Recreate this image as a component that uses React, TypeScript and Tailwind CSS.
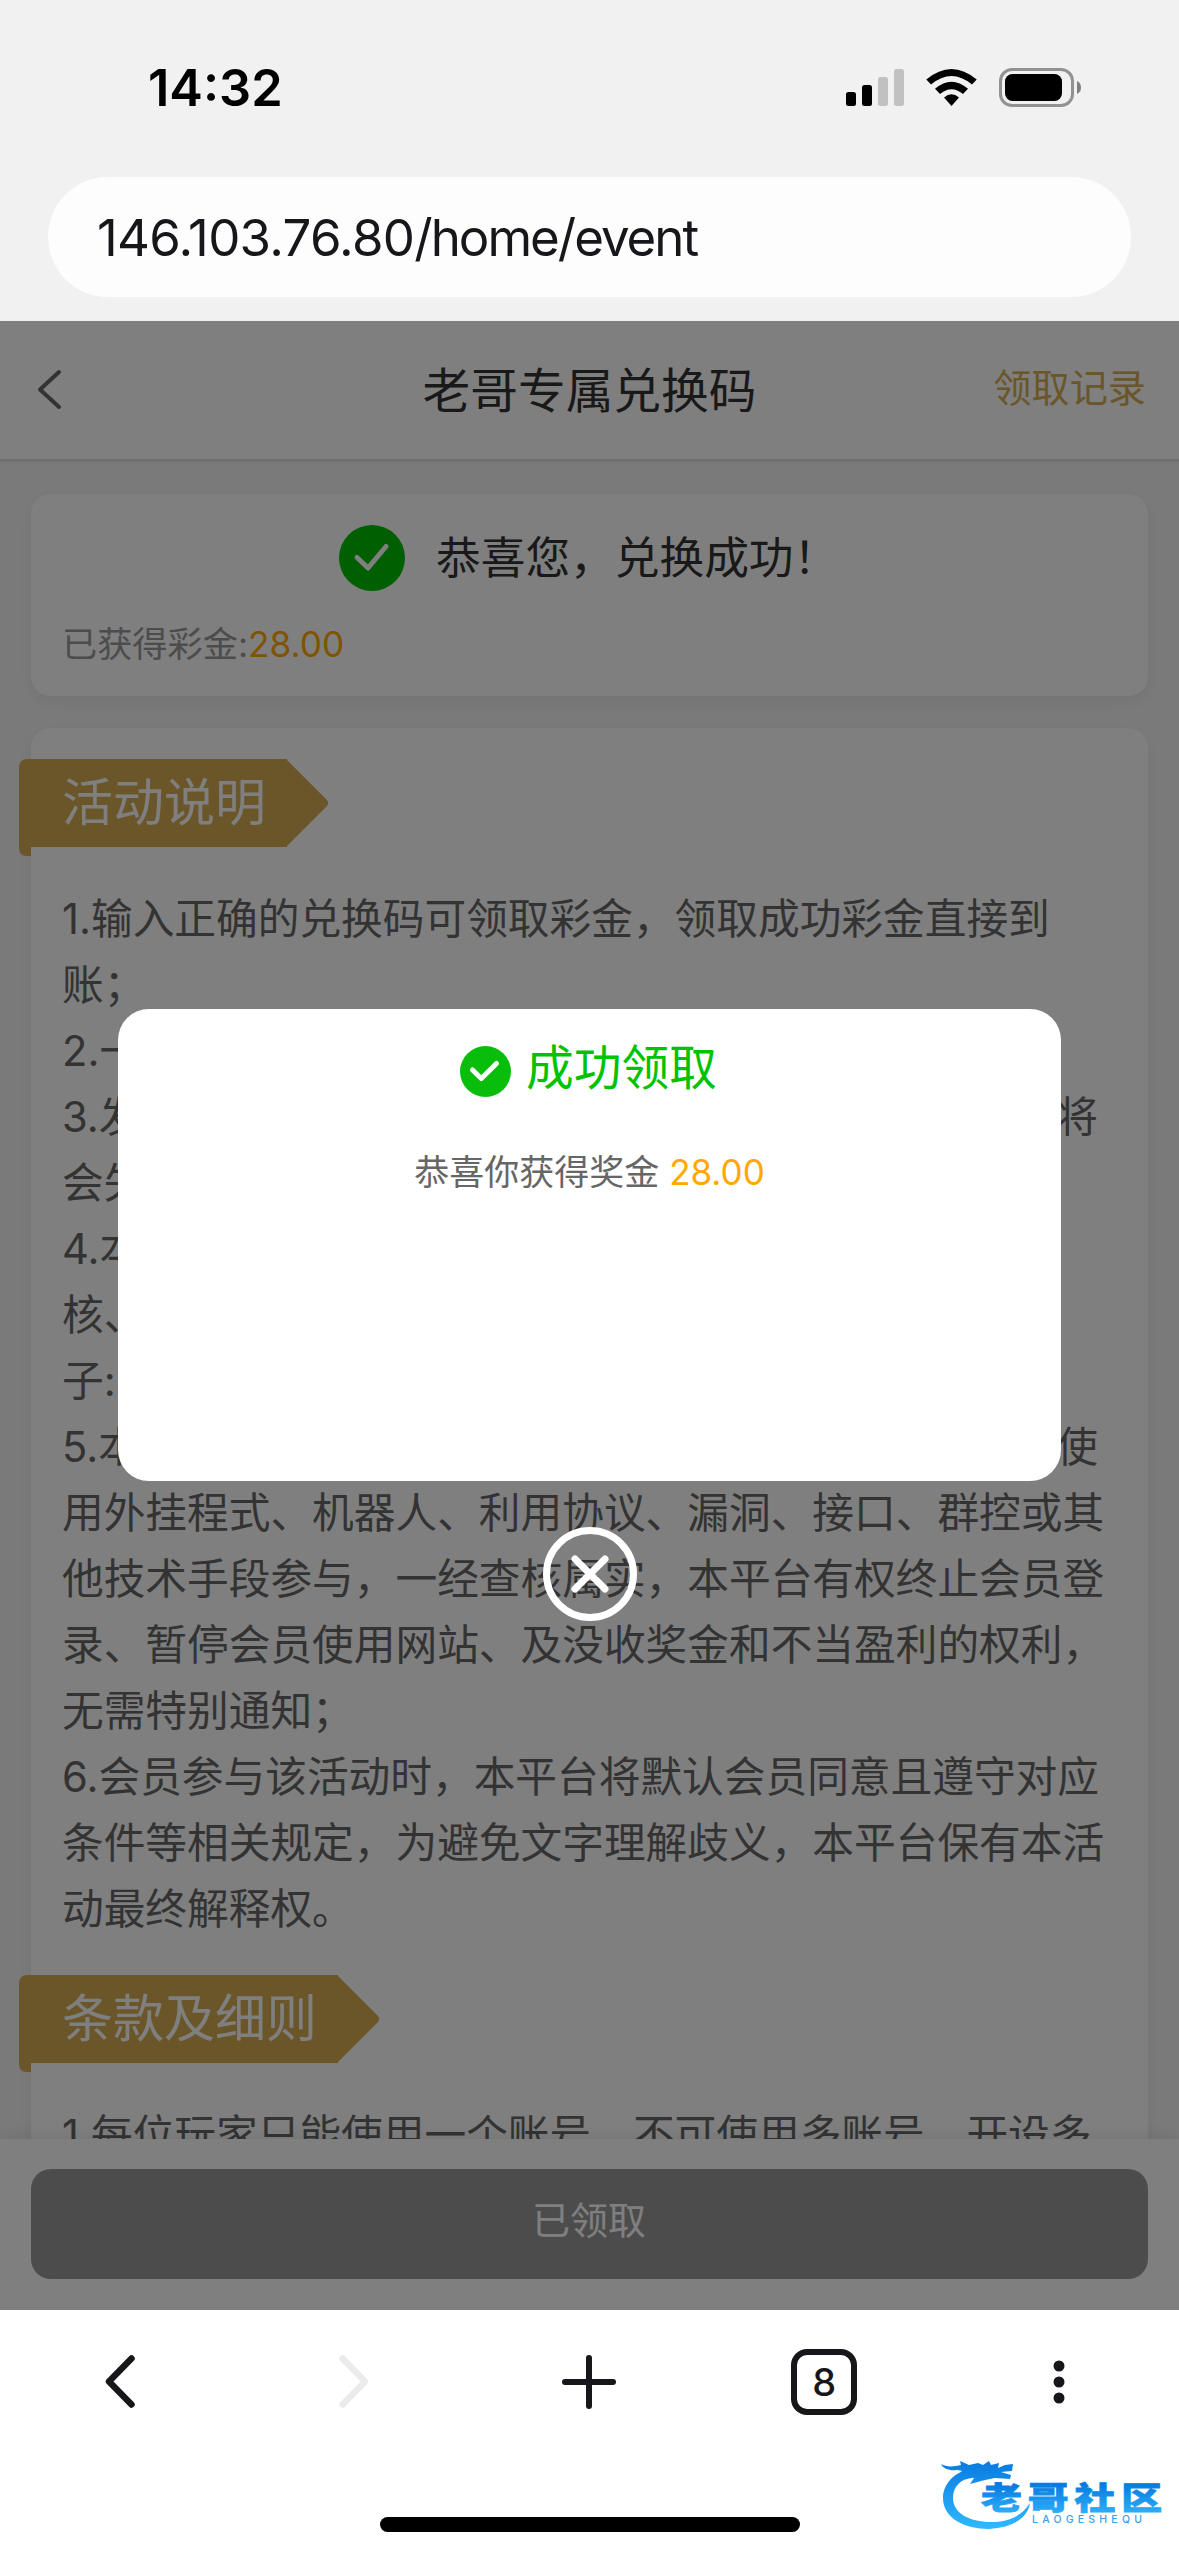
import type { ReactNode } from 'react';

const LATIN = "font-['Inter','Noto_Sans_CJK_SC',sans-serif]";

// Each line as [start, end]; the end sits flush against the right edge
const RULES = [
  ['1.输入正确的兑换码可领取彩金，领取成功彩金直接到'],
  ['账；'],
  ['2.一'],
  ['3.发', '将'],
  ['会失'],
  ['4.本'],
  ['核、'],
  ["子:'"],
  ['5.本', '使'],
  ['用外挂程式、机器人、利用协议、漏洞、接口、群控或其'],
  ['他技术手段参与，一经查核属实，本平台有权终止会员登'],
  ['录、暂停会员使用网站、及没收奖金和不当盈利的权利，'],
  ['无需特别通知；'],
  ['6.会员参与该活动时，本平台将默认会员同意且遵守对应'],
  ['条件等相关规定，为避免文字理解歧义，本平台保有本活'],
  ['动最终解释权。'],
];

function StatusIcons() {
  return (
    <svg className="h-[100px] w-[379px]" viewBox="0 0 379 100">
      <rect x="46" y="52" width="10" height="14" rx="2.5" />
      <rect x="62" y="45" width="10" height="21" rx="2.5" />
      <rect x="78" y="37" width="10" height="29" rx="2.5" fill="#c1c1c1" />
      <rect x="94" y="29" width="10" height="37" rx="2.5" fill="#c1c1c1" />
      <path d="M126.3 39.5Q151.500 18.500 176.700 39.500L172 44.500Q151.500 27.500 131 44.500Z" />
      <path d="M135 48.800Q151.500 34.500 168 48.800L163 54Q151.500 44.500 140 54Z" />
      <path d="M144 57.500Q151.500 51 159 57.500L151.500 66Z" />
      <rect x="200.500" y="29.500" width="72" height="36" rx="11.500" fill="none" stroke="#929292" strokeWidth="3" />
      <rect x="205" y="34" width="57" height="27" rx="7.500" />
      <path d="M277 41Q281 43 281 47.500Q281 52 277 54Z" fill="#808080" />
    </svg>
  );
}

function Ribbon({ children }: { children: ReactNode }) {
  return (
    <div className="relative -ml-3 h-[97px]">
      <svg className="absolute top-[80px] left-0 h-[17px] w-3" viewBox="0 0 12 17" fill="#d4ac52">
        <path d="M0 0H12V17H8Q0 17 0 9Z" />
      </svg>
      <div className="flex h-[88px] w-max">
        <h2 className="flex h-full items-center rounded-tl-lg bg-[#d4ac52] pr-[21px] pb-[2px] pl-[43px] text-[51px] leading-none text-white">
          {children}
        </h2>
        <svg className="-ml-px h-[88px] w-[43px]" viewBox="0 0 43 88" fill="#d4ac52">
          <path d="M0 0L40.500 40.500Q44 44 40.500 47.500L0 88Z" />
        </svg>
      </div>
    </div>
  );
}

function SiteLogo() {
  return (
    <svg className="h-[116px] w-[279px]" viewBox="0 0 279 116">
      <defs>
        <linearGradient id="logo" x1="0" y1="22" x2="0" y2="88" gradientUnits="userSpaceOnUse">
          <stop offset="0" stopColor="#0a7be0" />
          <stop offset="1" stopColor="#2fb8ff" />
        </linearGradient>
        <linearGradient id="word" x1="0" y1="-26" x2="0" y2="3" gradientUnits="userSpaceOnUse">
          <stop offset="0" stopColor="#0578de" />
          <stop offset="1" stopColor="#2bacf8" />
        </linearGradient>
      </defs>
      <g fill="url(#logo)">
        <path d="M72 28C54 32 43 44 43 58C43 78 64 89 89 89C112 88 128 78 130 63C122 76 108 82 91 82C69 82 53 73 53 58C53 46 61 39 72 38Z" />
        <path d="M41 24C48 28 55 26 61 25L60 21L69 25L78 23L83 25L89 21L91 25L99 23L98 28L105 25L113 24L112 31L101 32L111 35L110 39L95 38L85 40L70 44L74 38L58 36C64 33 63 30 57 30C50 31 43 29 41 24Z" />
      </g>
      <text transform="translate(81 69) scale(1.32 1)" fontSize="31" fontWeight="900" letterSpacing="4.400" fill="url(#word)" stroke="url(#word)" strokeWidth="0.800">老哥社区</text>
      <text x="132" y="82.500" fontSize="10.500" fontWeight="500" textLength="110" lengthAdjust="spacing" fill="#3d9fe8">LAOGESHEQU</text>
    </svg>
  );
}

function Modal() {
  return (
    <div className="absolute inset-0 flex flex-col items-center bg-black/50 pt-[688px]">
      <div className="flex h-[472px] w-[943px] flex-col items-center rounded-[31px] bg-white pt-[31px]">
        <div className="flex h-[62px] items-center gap-[15px] pr-[2px]">
          <svg className="h-[51px] w-[51px]" viewBox="0 0 51 51" fill="none">
            <circle cx="25.500" cy="25.500" r="25.500" fill="#09be0b" />
            <path d="M12.500 24L21.300 32.500L36.500 17.500" stroke="#fff" strokeWidth="5" strokeLinecap="round" strokeLinejoin="round" />
          </svg>
          <span className="relative -top-[2px] text-[47.700px] leading-none text-[#00c300]">成功领取</span>
        </div>
        <p className="mt-[47px] text-[35px] leading-[46px] text-[#666]">
          恭喜你获得奖金 <span className="font-normal text-[#ffa800]">28.00</span>
        </p>
      </div>
      <svg className="mt-[46px] h-[94px] w-[94px]" viewBox="0 0 94 94" fill="none" stroke="#fff">
        <circle cx="47" cy="47" r="43.500" strokeWidth="7" />
        <path d="M32 32L62 62M62 32L32 62" strokeWidth="7" strokeLinecap="round" />
      </svg>
    </div>
  );
}

export default function App() {
  return (
    <div className={`flex h-[2556px] w-[1179px] flex-col overflow-hidden bg-white ${LATIN}`}>
      <header className="h-[321px] shrink-0 bg-[#f1f1f1]">
        <div className="flex h-[177px] justify-between pt-10">
          <div className="pt-2 pl-[148px] text-[50.500px] leading-[80px] font-semibold text-black">14:32</div>
          <StatusIcons />
        </div>
        <div className="mx-12 flex h-[120px] items-center rounded-full bg-[#fdfdfd] pt-[3px] pl-[49px] text-[51px] text-[#17171b]">
          <span className="tracking-[-0.700px]">146.103.76.80</span>
          <span className="tracking-[-2px]">/home/event</span>
        </div>
      </header>

      <main className="relative flex h-[1989px] shrink-0 flex-col overflow-hidden bg-[#f5f5f5] font-[390]">
        <nav className="grid h-[141px] shrink-0 grid-cols-3 items-center border-b-[3px] border-[#e3e3e3] bg-white">
          <svg className="ml-[35px] h-[42px] w-[28px]" viewBox="0 0 28 42" fill="none" stroke="#666" strokeWidth="4" strokeLinecap="round" strokeLinejoin="round">
            <path d="M24 3L5 20.500L24 38" />
          </svg>
          <h1 className="pt-1 text-center text-[47.700px] leading-none whitespace-nowrap text-[#333]">老哥专属兑换码</h1>
          <span className="pr-[33px] pb-[3px] text-right text-[38.200px] leading-none text-[#d4ac52]">领取记录</span>
        </nav>

        <section className="mx-[31px] mt-8 h-[202px] shrink-0 rounded-[20px] bg-white px-8 pt-[31px] shadow-[0_6px_18px_rgba(0,0,0,0.06)]">
          <div className="flex h-[66px] items-center pl-[276px]">
            <svg className="h-[66px] w-[66px]" viewBox="0 0 66 66" fill="none">
              <circle cx="33" cy="33" r="33" fill="#00be00" />
              <path d="M18 32.500L29 43L47 21.500" stroke="#fff" strokeWidth="5" strokeLinecap="round" strokeLinejoin="round" />
            </svg>
            <span className="ml-[31px] text-[44.700px] leading-none text-[#333]">恭喜您，兑换成功！</span>
          </div>
          <p className="-ml-px mt-[27px] text-[35.200px] leading-[52px] text-[#999]">
            已获得彩金:<span className="font-normal text-[#ffa800]">28.00</span>
          </p>
        </section>

        <section className="mx-[31px] mt-8 h-[1500px] shrink-0 rounded-[20px] bg-white pt-[31px] shadow-[0_6px_18px_rgba(0,0,0,0.06)]">
          <Ribbon>活动说明</Ribbon>
          <div className="mt-[30px] ml-[31px] w-[1036px] text-[41.700px] leading-[66px] whitespace-nowrap text-[#666]">
            {RULES.map(([start, end]) => (
              <p key={start} className="flex justify-between">
                <span>{start}</span>
                {end && <span>{end}</span>}
              </p>
            ))}
          </div>
          <div className="mt-[33px]">
            <Ribbon>条款及细则</Ribbon>
          </div>
          <p className="mt-[30px] ml-[31px] text-[41.700px] leading-[66px] whitespace-nowrap text-[#666]">
            1.每位玩家只能使用一个账号，不可使用多账号、开设多
          </p>
        </section>

        <footer className="absolute inset-x-0 bottom-0 h-[171px] bg-white px-[31px] pt-[30px] shadow-[0_-4px_14px_rgba(0,0,0,0.08)]">
          <button className="block h-[110px] w-full rounded-[20px] bg-[#999] pr-px pb-2 text-[38px] leading-none text-white">已领取</button>
        </footer>

        <Modal />
      </main>

      <div className="relative flex-1 bg-white">
        <div className="mx-[3px] grid h-[144px] grid-cols-5 place-items-center">
          <svg className="h-[66px] w-[66px]" viewBox="0 0 66 66" fill="none" stroke="#17171b" strokeWidth="6.500" strokeLinecap="round" strokeLinejoin="round">
            <path d="M44.500 9.500L22 32.500L44.500 55.500" />
          </svg>
          <svg className="h-[66px] w-[66px]" viewBox="0 0 66 66" fill="none" stroke="#ebebeb" strokeWidth="6.500" strokeLinecap="round" strokeLinejoin="round">
            <path d="M20.500 9.500L43 32.500L20.500 55.500" />
          </svg>
          <svg className="h-[66px] w-[66px]" viewBox="0 0 66 66" fill="none" stroke="#17171b" strokeWidth="6" strokeLinecap="round">
            <path d="M33 9V57M9 33H57" />
          </svg>
          <span className="flex h-[66px] w-[66px] items-center justify-center rounded-2xl border-[6px] border-[#17171b] text-[38px] font-medium text-[#17171b]">8</span>
          <svg className="h-[66px] w-[66px]" viewBox="0 0 66 66" fill="#17171b">
            <circle cx="33" cy="17" r="5.500" />
            <circle cx="33" cy="33" r="5.500" />
            <circle cx="33" cy="49" r="5.500" />
          </svg>
        </div>
        <div className="mx-auto mt-[63px] h-[15px] w-[420px] rounded-full bg-black" />
        <div className="absolute right-0 bottom-0">
          <SiteLogo />
        </div>
      </div>
    </div>
  );
}
